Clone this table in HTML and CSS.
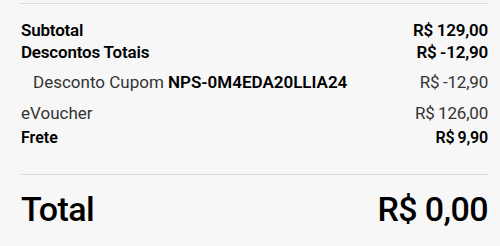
FILE: index.html
```html
<!DOCTYPE html>
<html lang="pt-BR">
<head>
<meta charset="utf-8">
<title>Resumo do pedido</title>
<link rel="stylesheet" href="styles.css">
</head>
<body>
<section class="summary">
  <div class="row row-strong row-first">
    <span>Subtotal</span>
    <span class="value">R$ 129,00</span>
  </div>
  <div class="row row-strong">
    <span>Descontos Totais</span>
    <span class="value">R$ -12,90</span>
  </div>
  <div class="row row-sub">
    <span>Desconto Cupom <b>NPS-0M4EDA20LLIA24</b></span>
    <span class="value">R$ -12,90</span>
  </div>
  <div class="row row-plain">
    <span>eVoucher</span>
    <span class="value">R$ 126,00</span>
  </div>
  <div class="row row-small">
    <span>Frete</span>
    <span class="value">R$ 9,90</span>
  </div>
  <div class="total">
    <span>Total</span>
    <span class="value">R$ 0,00</span>
  </div>
</section>
</body>
</html>
```
FILE: styles.css
```css
html, body {
  margin: 0;
  padding: 0;
  background: #f7f7f7;
}
body {
  font-family: Roboto, "Liberation Sans", sans-serif;
  color: #000;
}
.summary {
  margin: 3px 12px 0 20px;
  border-top: 1px solid #dcdcdc;
}
.row {
  display: flex;
  justify-content: space-between;
  align-items: baseline;
  padding-left: 1px;
}
.value {
  word-spacing: -0.5px;
  letter-spacing: -0.2px;
}
.row-strong {
  font-size: 17px;
  font-weight: 600;
  line-height: 22px;
  letter-spacing: -0.2px;
}
.row-first {
  margin-top: 15px;
}
.row-sub {
  font-size: 17px;
  color: #333;
  line-height: 22px;
  margin-top: 8px;
  padding-left: 13px;
}
.row-sub b {
  color: #000;
  font-weight: 600;
}
.row-plain {
  font-size: 17px;
  color: #333;
  line-height: 22px;
  margin-top: 9px;
}
.row-small {
  font-size: 16px;
  font-weight: 600;
  line-height: 22px;
  margin-top: 3px;
}
.total {
  display: flex;
  justify-content: space-between;
  align-items: baseline;
  margin-top: 25px;
  border-top: 1px solid #dcdcdc;
  padding: 14px 0 0 1px;
  font-size: 34px;
  font-weight: 500;
  line-height: 40px;
  letter-spacing: -0.6px;
}
.total .value {
  word-spacing: 0;
  letter-spacing: -0.6px;
}
```
